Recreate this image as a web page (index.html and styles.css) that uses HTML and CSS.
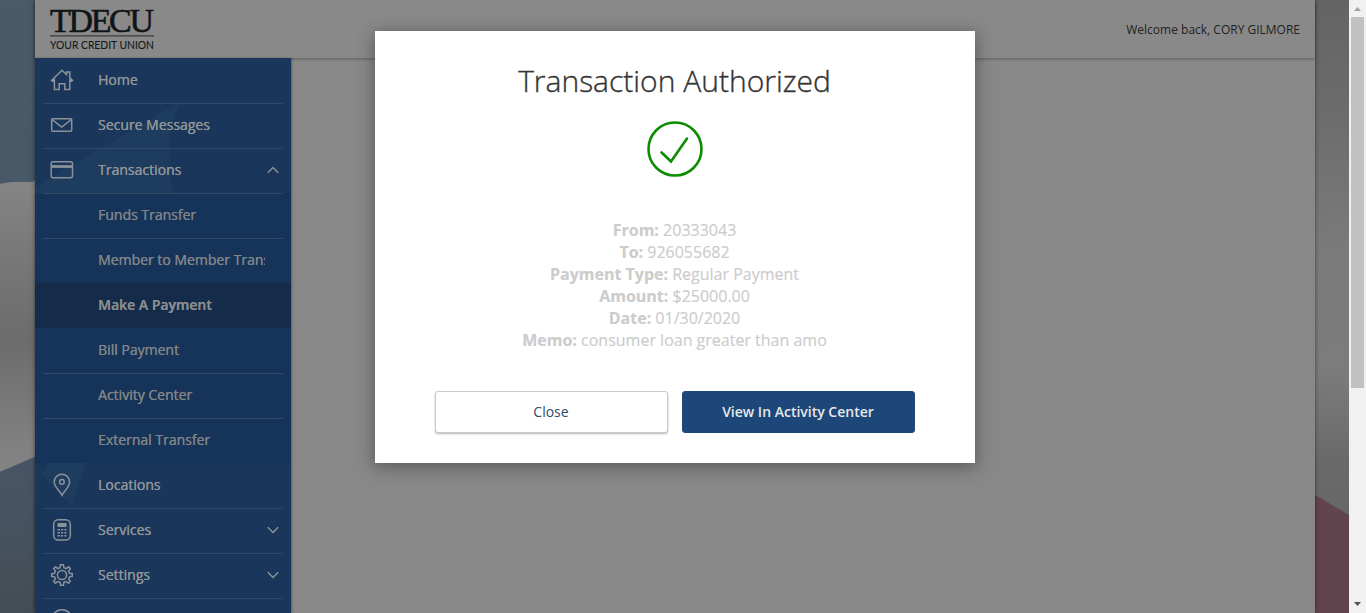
FILE: index.html
```html
<!DOCTYPE html>
<html lang="en">
<head>
<meta charset="utf-8">
<title>TDECU - Transaction Authorized</title>
<link rel="stylesheet" href="styles.css">
</head>
<body>
<div class="screen">
  <svg class="gutter" width="35" height="613" viewBox="0 0 35 613">
    <defs>
      <linearGradient id="sky" x1="0" y1="0" x2="0" y2="1"><stop offset="0" stop-color="#4b5a68"/><stop offset="1" stop-color="#435466"/></linearGradient>
      <linearGradient id="snow" x1="0" y1="0" x2="0" y2="1"><stop offset="0" stop-color="#858585"/><stop offset=".25" stop-color="#787878"/><stop offset=".55" stop-color="#6c6c6c"/><stop offset=".9" stop-color="#808080"/><stop offset="1" stop-color="#838383"/></linearGradient>
      <linearGradient id="sea" x1="0" y1="0" x2="0" y2="1"><stop offset="0" stop-color="#465566"/><stop offset=".5" stop-color="#46525e"/><stop offset="1" stop-color="#434d53"/></linearGradient>
    </defs>
    <rect width="35" height="613" fill="url(#sky)"/>
    <path d="M0 184Q10 181 33 182L35 180V457L0 472Z" fill="url(#snow)"/>
    <path d="M0 472L35 457V613H0Z" fill="url(#sea)"/>
  </svg>
  <div class="app">
    <header class="header">
      <svg class="logo" width="106" height="44" viewBox="0 0 106 44">
        <text class="logo-name" x="1" y="25" textLength="104" lengthAdjust="spacing">TDECU</text>
        <path class="logo-rule" d="M1 28.8H105"/>
        <text class="logo-tag" x="1" y="41.6" textLength="104" lengthAdjust="spacingAndGlyphs">YOUR CREDIT UNION</text>
      </svg>
      <span class="welcome">Welcome back, CORY GILMORE</span>
    </header>
    <div class="body">
      <nav class="nav">
        <svg class="facets" width="256" height="555" viewBox="0 0 256 555">
          <path d="M0 129L148 42Q130 70 135 100L137 135H0Z"/>
          <path d="M7 416L13 405H50L37 449Z"/>
        </svg>
        <a class="item"><svg class="icon" width="24" height="24" viewBox="0 0 24 24"><path d="M1.5 12.5L12 2.3L16.5 6.5V4H19.8V9.6L22.5 12.3L21.3 13.2L19.8 12V21.5H14.8V15.8H9.2V21.5H4.4V12L2.8 13.4Z"/></svg><span class="label">Home</span></a>
        <a class="item line"><svg class="icon" width="24" height="24" viewBox="0 0 24 24"><rect x="1.7" y="5.7" width="20" height="12.6" rx="1"/><path d="M2 6.5L11.7 14L21.4 6.5"/></svg><span class="label">Secure Messages</span></a>
        <a class="item line"><svg class="icon" width="24" height="24" viewBox="0 0 24 24"><rect x="1.2" y="3.7" width="21.3" height="16" rx="2"/><path d="M1.5 8.5H22.2" stroke-width="2.8"/></svg><span class="label">Transactions</span><svg class="chev" width="12" height="8" viewBox="0 0 12 8"><path d="M.8 6.7L6 1.5L11.2 6.7"/></svg></a>
        <div class="sub">
          <a class="item line"><span class="label">Funds Transfer</span></a>
          <a class="item line"><span class="label">Member to Member Transfer</span></a>
          <a class="item active"><span class="label">Make A Payment</span></a>
          <a class="item"><span class="label">Bill Payment</span></a>
          <a class="item line"><span class="label">Activity Center</span></a>
          <a class="item line"><span class="label">External Transfer</span></a>
        </div>
        <a class="item"><svg class="icon" width="24" height="24" viewBox="0 0 24 24"><path d="M12 22.3C10 18 4.2 14 4.2 9A7.7 7.7 0 0 1 19.6 9C19.6 14 14 18 12 22.3Z"/><circle cx="11.9" cy="8.9" r="2.3"/></svg><span class="label">Locations</span></a>
        <a class="item line"><svg class="icon" width="24" height="24" viewBox="0 0 24 24"><rect x="3.7" y="1.7" width="16.6" height="20.4" rx="4.5"/><path class="solid" d="M7.5 5H16.5V9H7.5ZM7.5 11H10V12.5H7.5ZM11 11H13.2V12.5H11ZM14.3 11H16.5V12.5H14.3ZM7.5 14H10V15.5H7.5ZM11 14H13.2V15.5H11ZM14.3 14H16.5V15.5H14.3ZM7.5 17H10V18.5H7.5ZM11 17H13.2V18.5H11ZM14.3 17H16.5V18.5H14.3Z"/></svg><span class="label">Services</span><svg class="chev" width="12" height="8" viewBox="0 0 12 8"><path d="M.8 1.3L6 6.5L11.2 1.3"/></svg></a>
        <a class="item line"><svg class="icon" width="24" height="24" viewBox="0 0 24 24"><path d="M10.4 1.7H13.4L13.9 4.7L16.1 5.6L18.5 3.8L20.3 5.6L18.6 8.1L19.5 10.3L22.3 10.7V13.3L19.5 13.8L18.6 16L20.3 18.3L18.5 20.2L16.1 18.5L13.9 19.4L13.4 22.3H10.6L10.1 19.4L7.9 18.5L5.5 20.2L3.7 18.3L5.4 16L4.5 13.8L1.7 13.3V10.7L4.5 10.3L5.4 8.1L3.7 5.6L5.5 3.8L7.9 5.6L10 4.7Z"/><circle cx="12" cy="12" r="4.6"/></svg><span class="label">Settings</span><svg class="chev" width="12" height="8" viewBox="0 0 12 8"><path d="M.8 1.3L6 6.5L11.2 1.3"/></svg></a>
        <a class="item line"><svg class="icon" width="24" height="24" viewBox="0 0 24 24"><circle cx="12" cy="12" r="10.3"/></svg></a>
      </nav>
      <main class="content"></main>
    </div>
  </div>
  <svg class="gutter" width="34" height="613" viewBox="0 0 34 613">
    <defs><linearGradient id="rock" x1="0" y1="0" x2="0" y2="1"><stop offset="0" stop-color="#646464"/><stop offset=".2" stop-color="#6d6d6d"/><stop offset=".4" stop-color="#7a7a7a"/><stop offset=".6" stop-color="#7c7c7c"/><stop offset=".75" stop-color="#6a6a6a"/><stop offset="1" stop-color="#626262"/></linearGradient></defs>
    <rect width="34" height="613" fill="url(#rock)"/>
    <path d="M0 495L34 515V613H0Z" fill="#62444e"/>
  </svg>
  <div class="scrollbar">
    <svg width="17" height="17" viewBox="0 0 17 17"><path d="M5 11L8.5 7L12 11Z" fill="#a3a3a3"/></svg>
    <div class="thumb"></div>
    <svg class="down" width="17" height="17" viewBox="0 0 17 17"><path d="M5 6L8.5 10L12 6Z" fill="#505050"/></svg>
  </div>
</div>
<section class="modal" role="dialog">
  <h1 class="title">Transaction Authorized</h1>
  <svg class="check" width="56" height="56" viewBox="0 0 56 56"><circle cx="28" cy="28" r="26.5"/><path d="M14.5 31.5L24 40.5L40 17.5"/></svg>
  <div class="details">
    <div><b>From:</b> 20333043</div>
    <div><b>To:</b> 926055682</div>
    <div><b>Payment Type:</b> Regular Payment</div>
    <div><b>Amount:</b> $25000.00</div>
    <div><b>Date:</b> 01/30/2020</div>
    <div><b>Memo:</b> consumer loan greater than amo</div>
  </div>
  <div class="actions">
    <button class="btn">Close</button>
    <button class="btn primary">View In Activity Center</button>
  </div>
</section>
</body>
</html>
```

FILE: styles.css
```css
* { box-sizing: border-box; }
body { margin: 0; overflow: hidden; font-family: "Open Sans", "Noto Sans", sans-serif; }
.screen { display: flex; width: 1366px; height: 613px; overflow: hidden; }
.gutter { display: block; flex: none; }
.app { flex: 1; display: flex; flex-direction: column; min-width: 0; background: #888; box-shadow: 0 0 4px rgba(0,0,0,.5); position: relative; }
.header { flex: none; height: 58px; display: flex; align-items: flex-start; justify-content: space-between; padding: 7px 15px 0 14px; background: #898989; box-shadow: 0 1px 3px rgba(0,0,0,.3); }
.logo { overflow: visible; }
.logo-name { font: 34px "Liberation Serif", serif; fill: #111416; stroke: #111416; stroke-width: .6px; }
.logo-tag { font: 11.5px Lato, sans-serif; fill: #15181a; stroke: #15181a; stroke-width: .1px; }
.logo-rule { stroke: #3a3c3d; stroke-width: 1.3; }
.welcome { margin-top: 14px; font-size: 12px; line-height: 17px; color: #222; white-space: nowrap; }
.body { flex: 1; display: flex; min-height: 0; }
.nav { position: relative; width: 256px; overflow: hidden; background: #1a365b; box-shadow: 1px 0 2px rgba(0,0,0,.3); }
.facets { position: absolute; inset: 0; fill: #203e60; opacity: .75; }
.item { position: relative; display: flex; align-items: center; height: 45px; padding: 0 0 2px 15px; font-size: 14px; font-weight: 400; color: #929698; text-shadow: .3px 0 #929698; }
.line::before { content: ""; position: absolute; top: 0; left: 8px; width: 240px; height: 1px; background: #304a68; }
.icon { flex: none; fill: none; stroke: #8b9299; stroke-width: 1.5; }
.icon .solid { fill: #8b9299; stroke: none; }
.label { width: 167px; margin-left: 24px; margin-top: -1px; overflow: hidden; white-space: nowrap; }
.chev { margin-left: 2px; fill: none; stroke: #8b9299; stroke-width: 1.5; }
.sub { position: relative; background: #163459; }
.sub .item { color: #808488; text-shadow: .3px 0 #808488; }
.sub .label { margin-left: 48px; }
.sub .item.active { background: #142c49; color: #8b8e90; font-weight: 600; }
.content { flex: 1; }
.scrollbar { width: 17px; flex: none; display: flex; flex-direction: column; align-items: center; background: #f1f1f1; }
.thumb { width: 13px; height: 371px; background: #c1c1c1; }
.down { margin-top: auto; }
.modal { position: absolute; left: 375px; top: 31px; width: 600px; height: 432px; padding: 30px 60px; display: flex; flex-direction: column; align-items: center; background: #fff; box-shadow: 0 3px 16px 1px rgba(0,0,0,.35); }
.title { margin: 0; padding-right: 1px; font-size: 30px; line-height: 40px; font-weight: 300; color: #333; -webkit-text-stroke: .35px #333; white-space: nowrap; }
.check { margin-top: 20px; fill: none; stroke: #0c8d00; stroke-width: 2.6; stroke-linecap: round; }
.details { margin-top: 42px; padding-right: 1px; font-size: 16px; line-height: 22px; color: #ccc; text-align: center; white-space: nowrap; -webkit-text-stroke: .15px #ccc; }
.actions { display: flex; gap: 14px; margin-top: 40px; }
.btn { width: 233px; height: 42px; padding: 0 1px 2px 0; border: 1px solid #ccc; border-radius: 3px; background: #fff; color: #334a68; font: 14px "Open Sans", sans-serif; box-shadow: 0 1px 2px rgba(0,0,0,.3); }
.primary { border-color: #1d4679; background: #1d4679; color: #e6e8eb; font-weight: 600; box-shadow: none; }
```
